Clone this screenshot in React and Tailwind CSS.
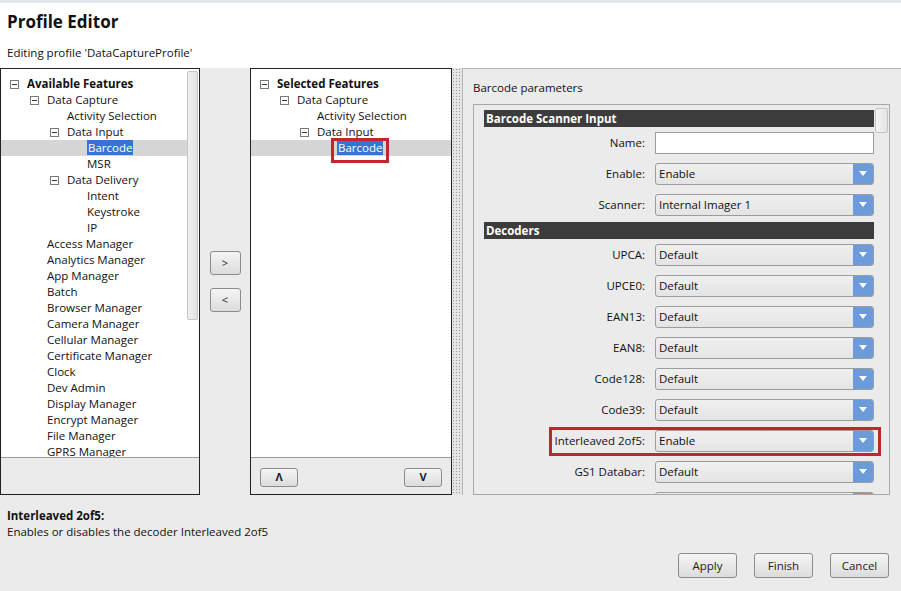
import React from "react";

const FONT = { fontFamily: '"Open Sans", "Noto Sans", Arial, sans-serif' };

const PL = ["pl-[9px]", "pl-[29px]", "pl-[49px]", "pl-[69px]"];

function Expander() {
  return (
    <span className="relative inline-block w-[9px] h-[9px] border border-[#7a7a7a] bg-white shrink-0">
      <span className="absolute left-[1px] right-[1px] top-[3px] h-px bg-[#333]" />
    </span>
  );
}

function TreeRow({ level, text, exp, bold, selected, redBox }) {
  return (
    <div className={`h-4 flex items-center ${PL[level]} ${selected ? "bg-[#d6d6d6]" : ""}`}>
      {exp ? <Expander /> : <span className="w-[9px] shrink-0" />}
      <span className={`ml-[8px] leading-4 whitespace-nowrap relative ${bold ? "font-bold" : ""}`}>
        {selected ? (
          <span className="bg-[#3574d4] text-white px-px">{text}</span>
        ) : (
          text
        )}
        {redBox && (
          <span className="absolute left-[-6px] right-[-6px] top-[-2px] bottom-[-7px] border-[3px] border-[#c0272d]" />
        )}
      </span>
    </div>
  );
}

const leftTree = [
  [0, "Available Features", true, true],
  [1, "Data Capture", true],
  [2, "Activity Selection"],
  [2, "Data Input", true],
  [3, "Barcode", false, false, true],
  [3, "MSR"],
  [2, "Data Delivery", true],
  [3, "Intent"],
  [3, "Keystroke"],
  [3, "IP"],
  [1, "Access Manager"],
  [1, "Analytics Manager"],
  [1, "App Manager"],
  [1, "Batch"],
  [1, "Browser Manager"],
  [1, "Camera Manager"],
  [1, "Cellular Manager"],
  [1, "Certificate Manager"],
  [1, "Clock"],
  [1, "Dev Admin"],
  [1, "Display Manager"],
  [1, "Encrypt Manager"],
  [1, "File Manager"],
  [1, "GPRS Manager"],
];

const midTree = [
  [0, "Selected Features", true, true],
  [1, "Data Capture", true],
  [2, "Activity Selection"],
  [2, "Data Input", true],
  [3, "Barcode", false, false, true, true],
];

function SmallButton({ children, className = "" }) {
  return (
    <div
      className={`flex items-center justify-center rounded-[3px] border border-[#8c8c8c] bg-gradient-to-b from-[#f5f5f5] to-[#dcdcdc] text-[#222] ${className}`}
    >
      {children}
    </div>
  );
}

function Dropdown({ value }) {
  return (
    <div className="w-[219px] h-[22px] flex rounded-[3px] border border-[#9c9c9c] bg-gradient-to-b from-[#f0f0f0] to-[#e4e4e4] overflow-hidden">
      <div className="flex-1 pl-[3px] leading-[20px] text-[#111]">{value}</div>
      <div className="w-[20px] bg-[#6b9bd9] flex items-center justify-center">
        <svg width="8" height="6" viewBox="0 0 8 6">
          <path d="M0 0 L8 0 L4 5 Z" fill="#fff" />
        </svg>
      </div>
    </div>
  );
}

function ParamRow({ label, children, redBox }) {
  return (
    <div className="relative h-[31px] flex items-center">
      <div className="w-[161px] text-right pr-0 text-[#111] whitespace-nowrap">{label}</div>
      <div className="ml-[10px]">{children}</div>
      {redBox && (
        <div className="absolute left-[65px] w-[332px] top-[2px] h-[29px] border-[3px] border-[#c0272d]" />
      )}
    </div>
  );
}

function SectionBar({ children, className = "" }) {
  return (
    <div className={`w-[390px] h-[17px] bg-[#3c3c3c] text-white font-bold pl-[2px] leading-[17px] ${className}`}>
      {children}
    </div>
  );
}

export default function App() {
  const decoders = [
    ["UPCA:", "Default"],
    ["UPCE0:", "Default"],
    ["EAN13:", "Default"],
    ["EAN8:", "Default"],
    ["Code128:", "Default"],
    ["Code39:", "Default"],
    ["Interleaved 2of5:", "Enable", true],
    ["GS1 Databar:", "Default"],
    ["", "Default"],
  ];
  return (
    <div style={FONT} className="w-[901px] h-[591px] bg-[#ebebeb] text-[11.5px] text-[#111] flex flex-col overflow-hidden">
      <div className="h-[3px] bg-[#dfe7ef]" />
      <div className="h-[65px] bg-white pl-[7px] flex flex-col">
        <div className="mt-[7px] text-[17px] font-bold leading-[24px] text-[#111]">Profile Editor</div>
        <div className="mt-[11px] leading-[16px]">Editing profile 'DataCaptureProfile'</div>
      </div>

      <div className="h-[427px] flex">
        {/* left panel */}
        <div className="w-[200px] border border-[#222] flex flex-col bg-[#ebebeb]">
          <div className="h-[389px] bg-white flex border-b border-[#9a9a9a]">
            <div className="flex-1 pt-[7px] overflow-hidden">
              {leftTree.map(([l, t, e, b, s], i) => (
                <TreeRow key={i} level={l} text={t} exp={e} bold={b} selected={s} />
              ))}
            </div>
            <div className="w-[12px] pt-[2px] pr-[1px]">
              <div className="h-[249px] rounded-[2px] border border-[#c4c4c4] bg-gradient-to-r from-[#f0f0f0] to-[#e2e2e2]" />
            </div>
          </div>
        </div>

        {/* move buttons */}
        <div className="w-[50px] flex flex-col items-center pt-[183px] gap-[13px]">
          <SmallButton className="w-[31px] h-[24px] text-[11px]">&gt;</SmallButton>
          <SmallButton className="w-[31px] h-[24px] text-[11px]">&lt;</SmallButton>
        </div>

        {/* middle panel */}
        <div className="w-[202px] border border-[#222] flex flex-col bg-[#ebebeb]">
          <div className="h-[389px] bg-white pt-[7px] border-b border-[#9a9a9a]">
            {midTree.map(([l, t, e, b, s, r], i) => (
              <TreeRow key={i} level={l} text={t} exp={e} bold={b} selected={s} redBox={r} />
            ))}
          </div>
          <div className="flex justify-between px-[9px] pt-[10px]">
            <SmallButton className="w-[38px] h-[19px] text-[11px] font-bold">Λ</SmallButton>
            <SmallButton className="w-[38px] h-[19px] text-[11px] font-bold">V</SmallButton>
          </div>
        </div>

        {/* splitter */}
        <div className="w-[10px] bg-[#e4e4e4] bg-[radial-gradient(#9a9a9a_0.7px,transparent_0.8px)] bg-[length:3px_3px]" />

        {/* right panel */}
        <div className="flex-1 border-l border-t border-[#b4b4b4] bg-[#ebebeb] pl-[10px] pr-[11px] flex flex-col">
          <div className="mt-[11px] leading-[16px]">Barcode parameters</div>
          <div className="mt-[8px] flex-1 border border-[#a8a8a8] flex overflow-hidden">
            <div className="flex-1 pl-[10px] pt-[5px]">
              <SectionBar>Barcode Scanner Input</SectionBar>
              <ParamRow label="Name:">
                <div className="w-[219px] h-[22px] bg-white border border-[#9c9c9c]" />
              </ParamRow>
              <ParamRow label="Enable:">
                <Dropdown value="Enable" />
              </ParamRow>
              <ParamRow label="Scanner:">
                <Dropdown value="Internal Imager 1" />
              </ParamRow>
              <SectionBar className="mt-[2px]">Decoders</SectionBar>
              {decoders.map(([l, v, r], i) => (
                <ParamRow key={i} label={l} redBox={r}>
                  <Dropdown value={v} />
                </ParamRow>
              ))}
            </div>
            <div className="w-[14px] pt-[3px] pr-[1px]">
              <div className="h-[25px] rounded-[2px] border border-[#c4c4c4] bg-gradient-to-r from-[#f4f4f4] to-[#e4e4e4]" />
            </div>
          </div>
        </div>
      </div>

      {/* bottom */}
      <div className="flex-1 flex flex-col px-[7px]">
        <div className="mt-[13px] font-bold leading-[16px]">Interleaved 2of5:</div>
        <div className="leading-[16px]">Enables or disables the decoder Interleaved 2of5</div>
        <div className="mt-[13px] flex justify-end gap-[17px] pr-[5px]">
          <SmallButton className="w-[59px] h-[25px]">Apply</SmallButton>
          <SmallButton className="w-[59px] h-[25px]">Finish</SmallButton>
          <SmallButton className="w-[59px] h-[25px]">Cancel</SmallButton>
        </div>
      </div>
    </div>
  );
}
